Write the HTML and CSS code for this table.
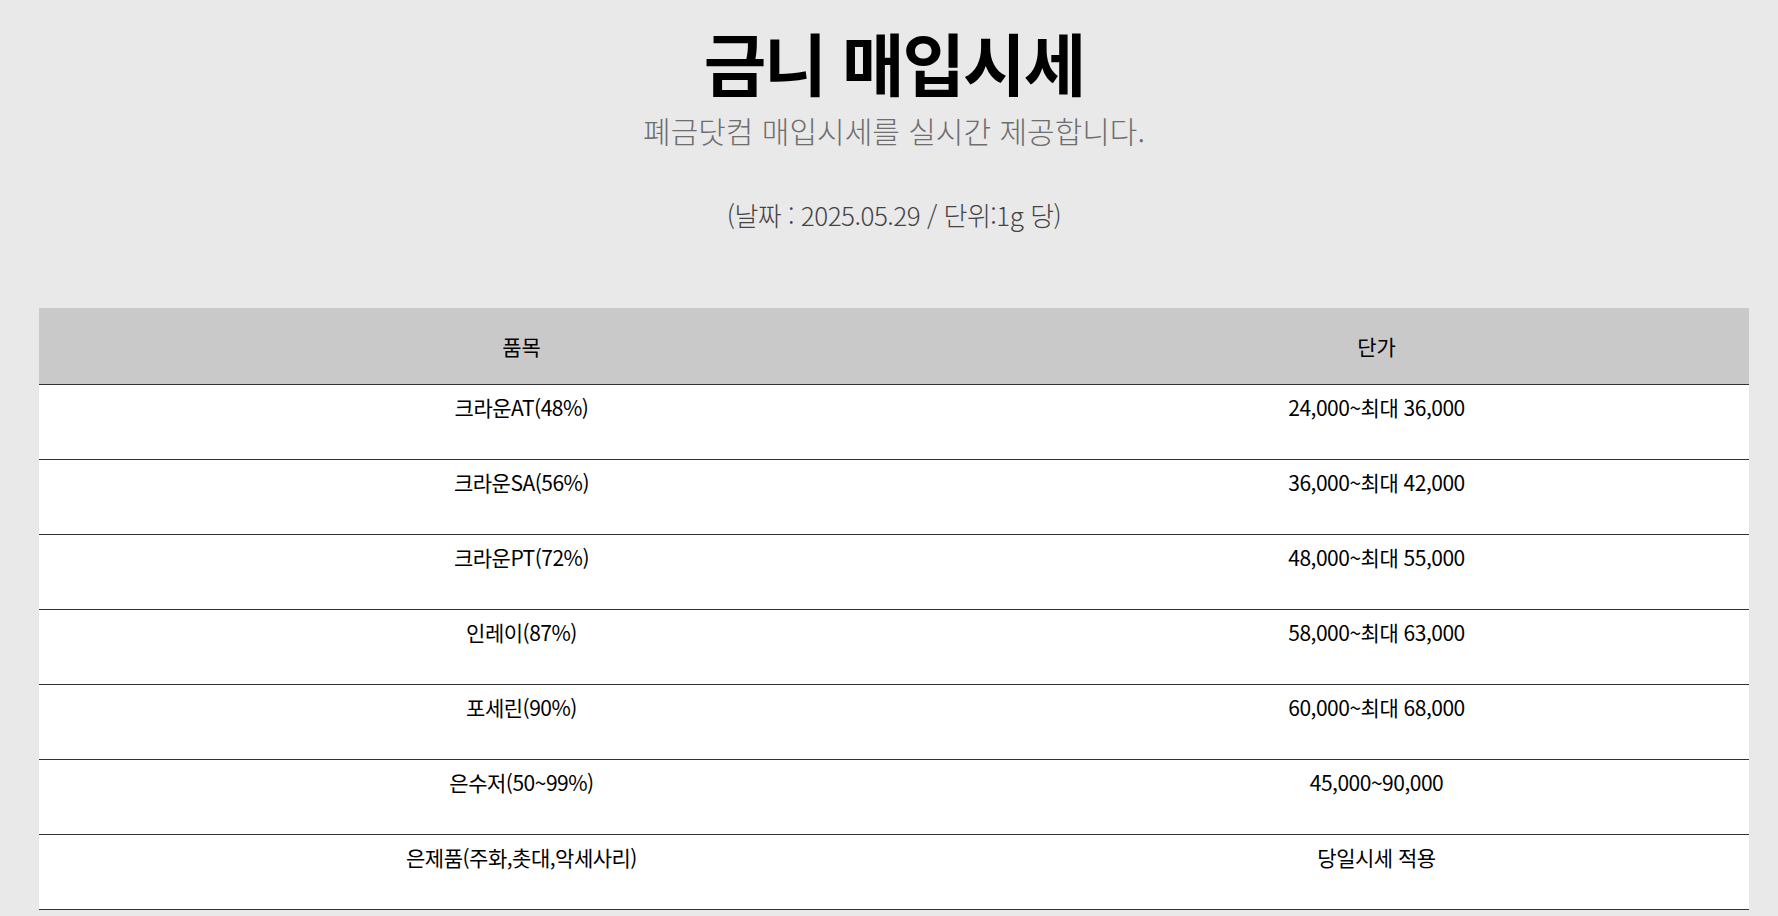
FILE: index.html
```html
<!DOCTYPE html>
<html lang="ko">
<head>
<meta charset="utf-8">
<title>금니 매입시세</title>
<link rel="stylesheet" href="styles.css">
</head>
<body>
<div class="page">
  <header class="intro">
    <h1 class="title">금니 매입시세</h1>
    <p class="subtitle">폐금닷컴 매입시세를 실시간 제공합니다.</p>
    <p class="date">(날짜 : 2025.05.29 / 단위:1g 당)</p>
  </header>
  <table class="price-table">
    <colgroup>
      <col class="col-item">
      <col class="col-price">
    </colgroup>
    <thead>
      <tr><th>품목</th><th>단가</th></tr>
    </thead>
    <tbody>
      <tr><td>크라운AT(48%)</td><td>24,000~최대 36,000</td></tr>
      <tr><td>크라운SA(56%)</td><td>36,000~최대 42,000</td></tr>
      <tr><td>크라운PT(72%)</td><td>48,000~최대 55,000</td></tr>
      <tr><td>인레이(87%)</td><td>58,000~최대 63,000</td></tr>
      <tr><td>포세린(90%)</td><td>60,000~최대 68,000</td></tr>
      <tr><td>은수저(50~99%)</td><td>45,000~90,000</td></tr>
      <tr><td>은제품(주화,촛대,악세사리)</td><td>당일시세 적용</td></tr>
    </tbody>
  </table>
</div>
</body>
</html>
```

FILE: styles.css
```css
html, body {
  margin: 0;
  padding: 0;
  background: #e9e9e9;
}
body {
  font-family: "Noto Sans CJK KR", "Noto Sans", sans-serif;
  color: #000;
}
.page {
  display: flex;
  flex-direction: column;
  padding-left: 39px;
}
.intro {
  display: flex;
  flex-direction: column;
  align-items: center;
  margin-left: -39px;
  padding-left: 10px;
}
.title {
  margin: 22px 0 0;
  font-size: 68px;
  line-height: 80px;
  font-weight: 700;
  letter-spacing: -2px;
}
.subtitle {
  margin: 8px 0 0;
  font-size: 30px;
  line-height: 40px;
  font-weight: 300;
  color: #6e6e6e;
}
.date {
  margin: 48px 0 0;
  font-size: 26px;
  line-height: 34px;
  font-weight: 300;
  color: #444;
  letter-spacing: -0.5px;
}
.price-table {
  margin-top: 76px;
  width: 1710px;
  border-collapse: collapse;
  table-layout: fixed;
  background: #fff;
  font-size: 21px;
}
.col-item { width: 965px; }
.col-price { width: 745px; }
.price-table th {
  height: 76px;
  padding: 0;
  background: #c9c9c9;
  font-weight: 400;
  text-align: center;
  vertical-align: middle;
  border-bottom: 1px solid #333;
}
.price-table td {
  height: 75px;
  padding: 9px 0 0;
  box-sizing: border-box;
  line-height: 26px;
  text-align: center;
  vertical-align: top;
  border-bottom: 1px solid #333;
  letter-spacing: -0.5px;
}
```
